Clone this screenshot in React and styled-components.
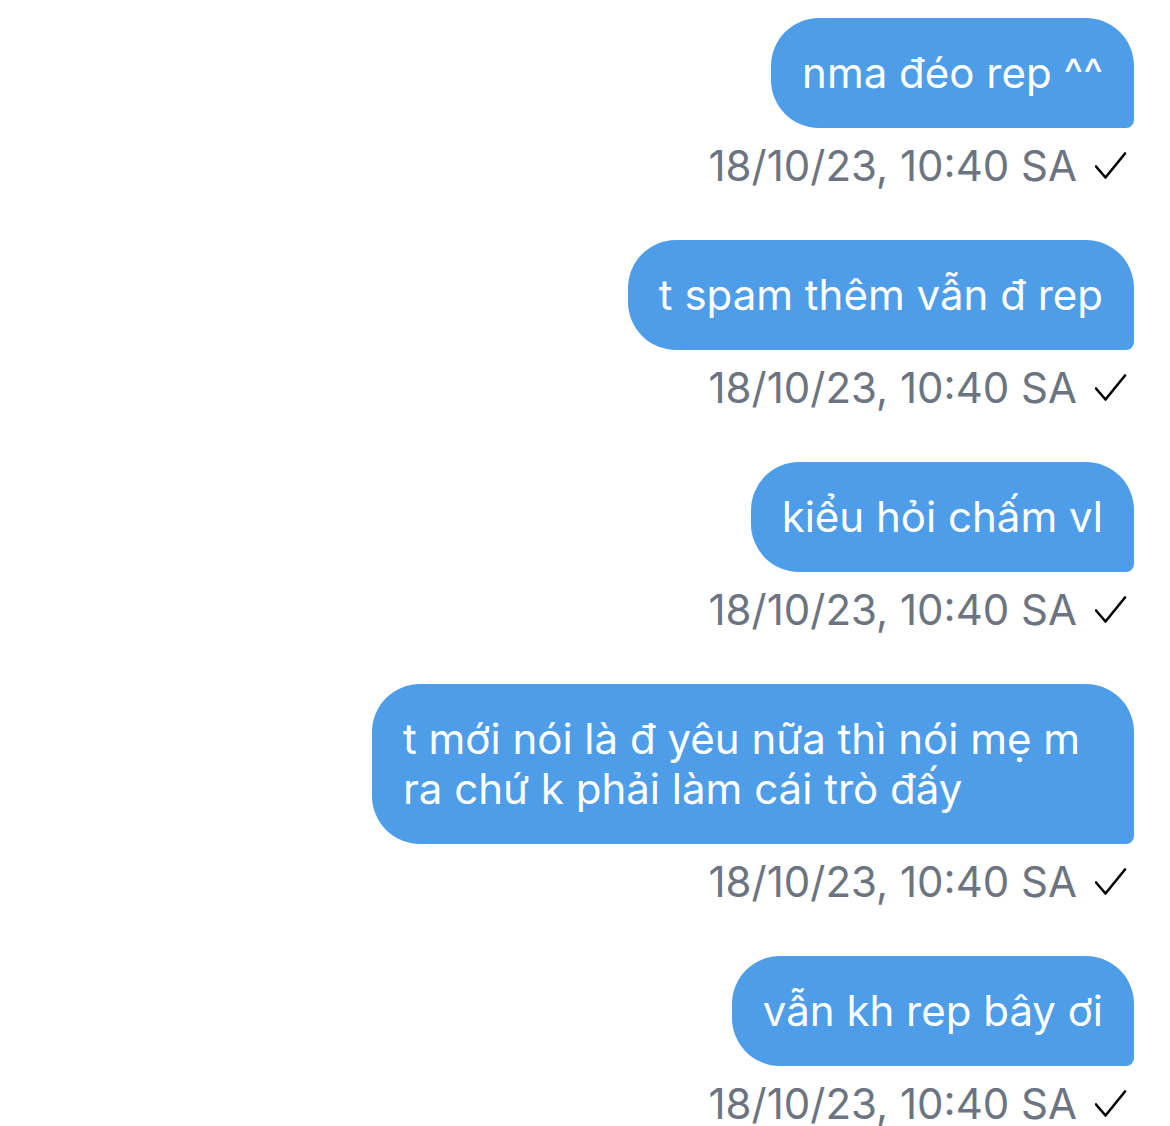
import React from "react";
import styled, { createGlobalStyle } from "styled-components";

const Global = createGlobalStyle`
  html, body { margin: 0; padding: 0; background: #ffffff; }
  body { font-family: Inter, "Noto Sans", "Liberation Sans", sans-serif; }
  * { box-sizing: border-box; }
`;

const Thread = styled.div`
  display: flex;
  flex-direction: column;
  align-items: flex-end;
  padding: 18px 36px 0 0;
`;

const Group = styled.div`
  display: flex;
  flex-direction: column;
  align-items: flex-end;
  margin-bottom: 49px;
`;

const Bubble = styled.div`
  background: #4e9de8;
  color: #ffffff;
  font-size: 42px;
  line-height: 50px;
  padding: 30px 31px;
  border-radius: 48px 48px 8px 48px;
  max-width: 762px;
`;

const Meta = styled.div`
  display: flex;
  align-items: center;
  gap: 18px;
  margin-top: 13px;
  padding-right: 7px;
  color: #6c7481;
  font-size: 42px;
  line-height: 50px;
`;

const Check = () => (
  <svg width="32" height="28" viewBox="0 0 32 28" fill="none">
    <path d="M1 14.5 L10.5 25.5 L30 1.5" stroke="#000" strokeWidth="2.6" strokeLinecap="round" strokeLinejoin="round" />
  </svg>
);

const messages = [
  "nma đéo rep ^^",
  "t spam thêm vẫn đ rep",
  "kiểu hỏi chấm vl",
  "t mới nói là đ yêu nữa thì nói mẹ m ra chứ k phải làm cái trò đấy",
  "vẫn kh rep bây ơi",
];

export default function App() {
  return (
    <>
      <Global />
      <Thread>
        {messages.map((m, i) => (
          <Group key={i}>
            <Bubble>{m}</Bubble>
            <Meta>
              <span>18/10/23, 10:40 SA</span>
              <Check />
            </Meta>
          </Group>
        ))}
      </Thread>
    </>
  );
}
